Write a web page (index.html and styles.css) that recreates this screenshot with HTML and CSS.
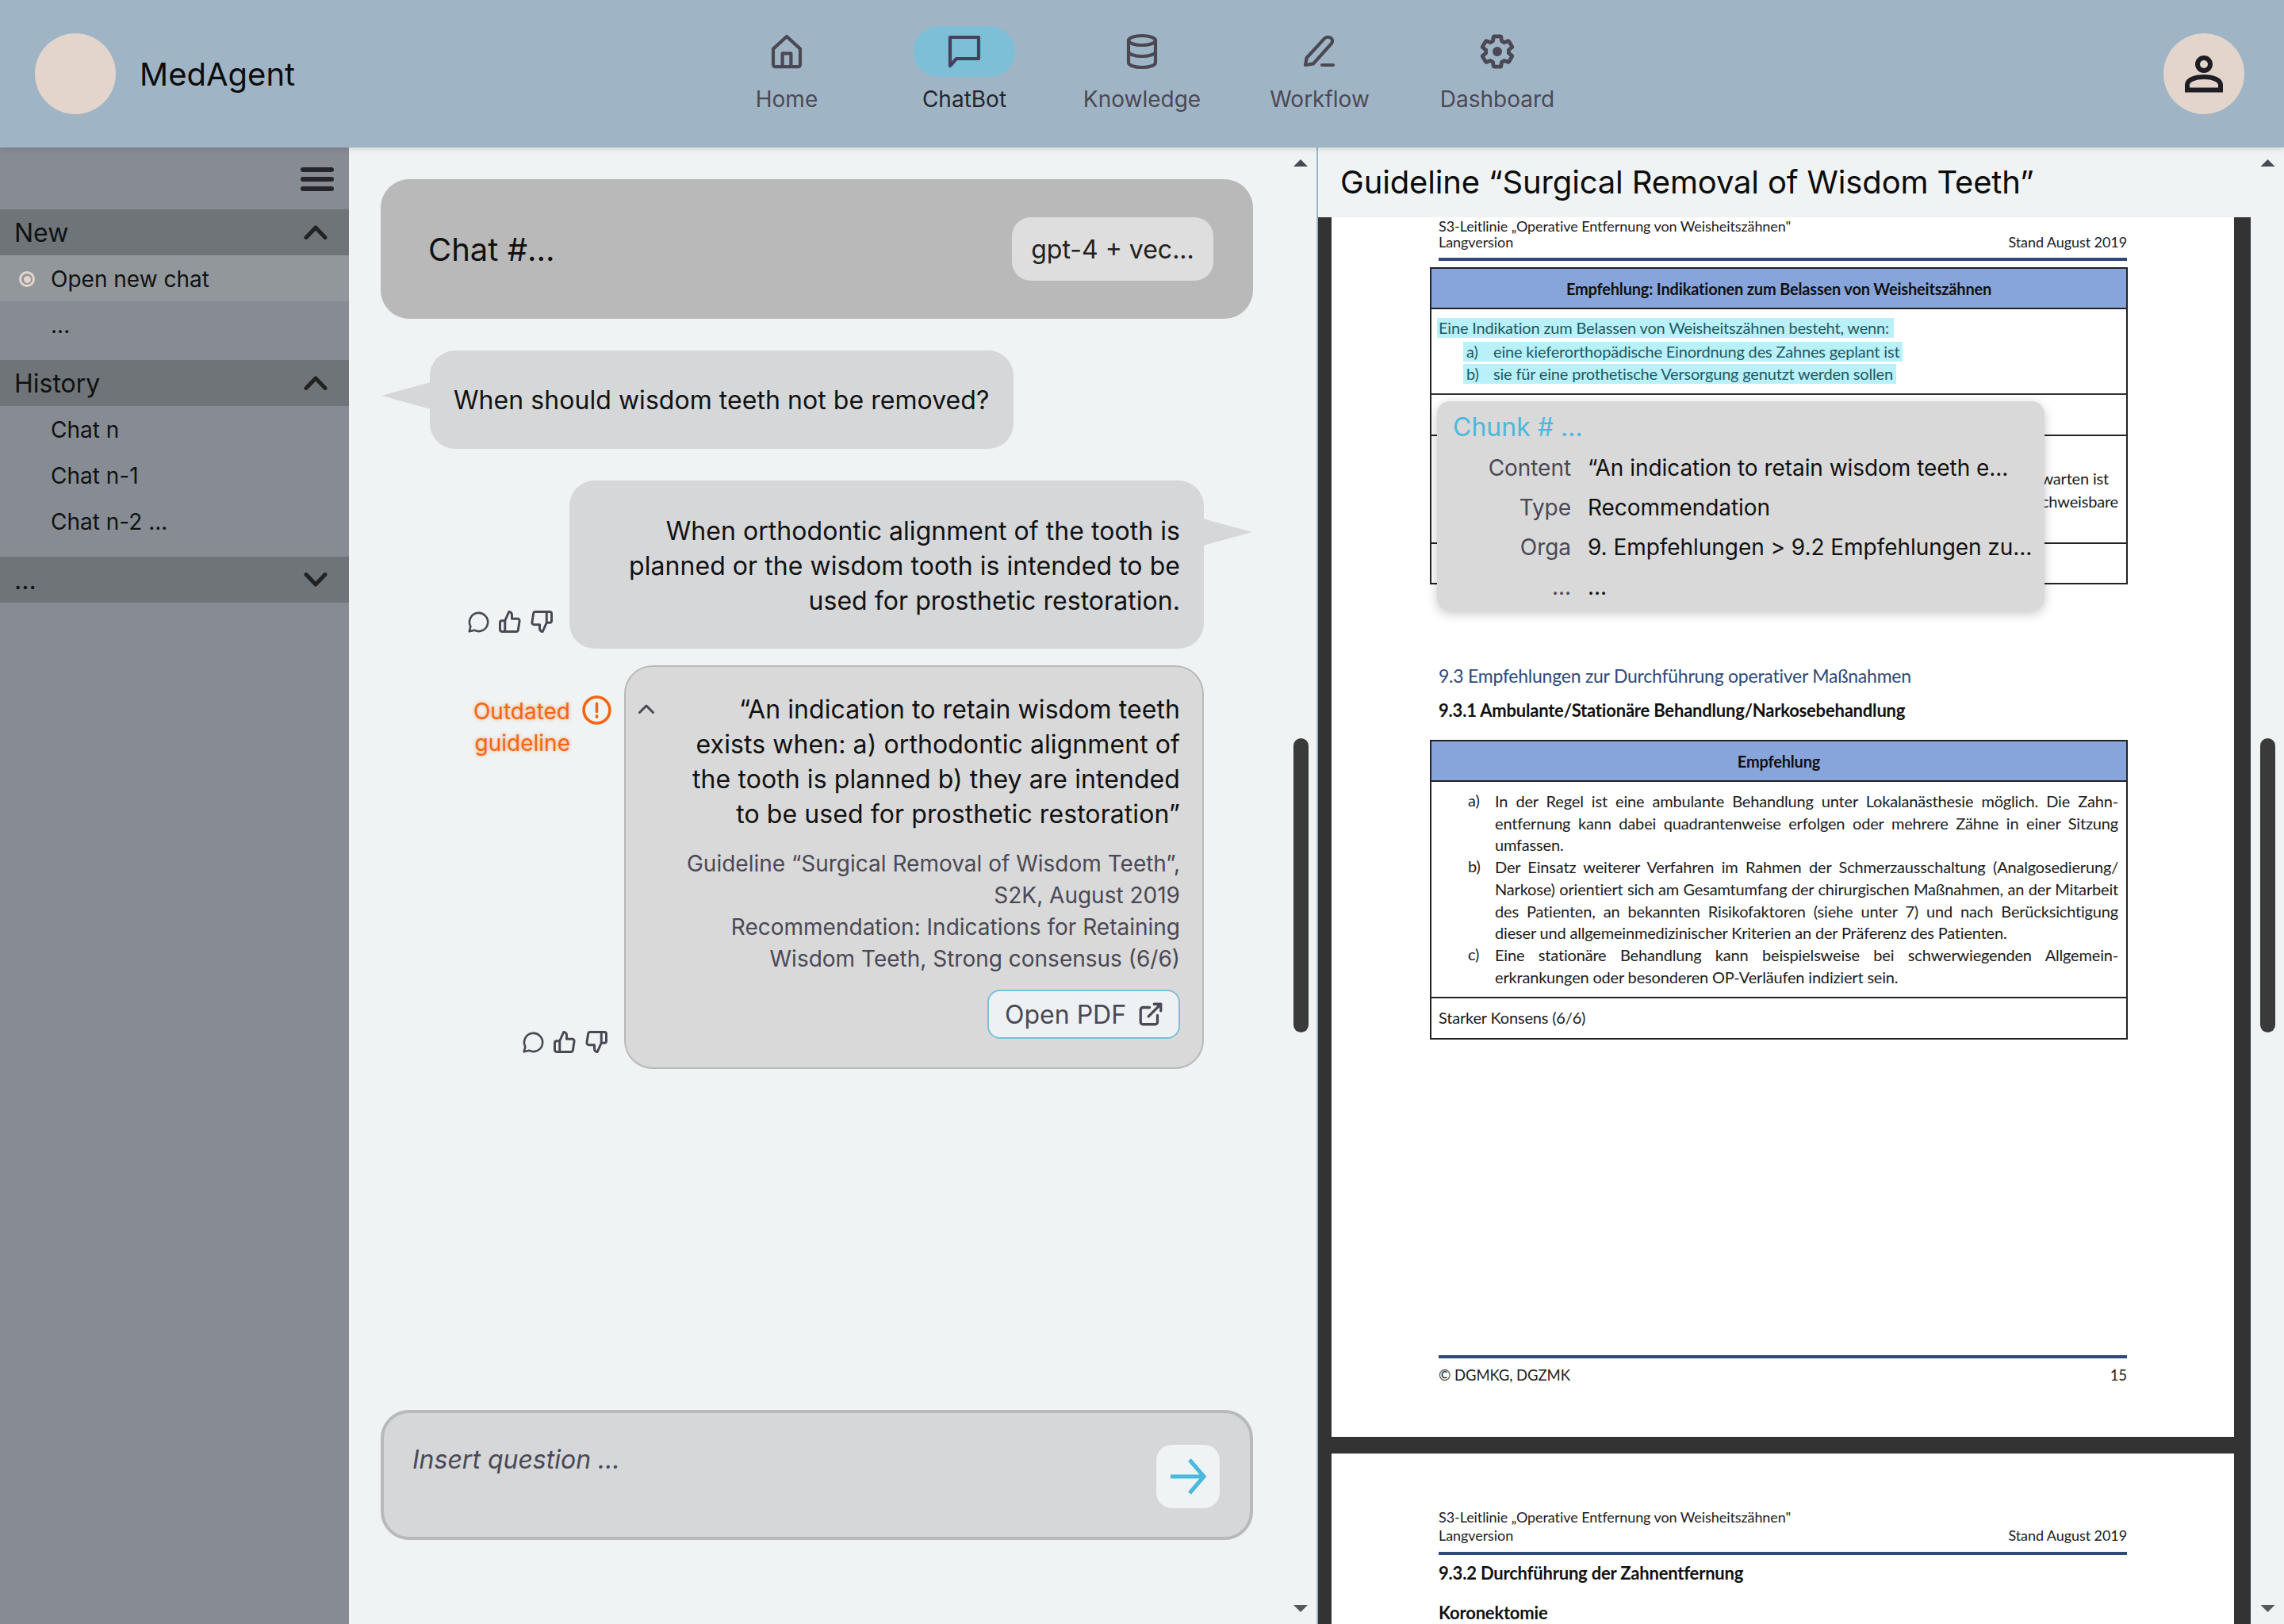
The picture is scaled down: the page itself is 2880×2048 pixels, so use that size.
FILE: index.html
```html
<!DOCTYPE html>
<html lang="en">
<head>
<meta charset="utf-8">
<title>MedAgent</title>
<link rel="stylesheet" href="styles.css">
</head>
<body>
<div class="app">
  <header class="topbar">
    <div class="brand"><span class="avatar"></span><span class="brand-name">MedAgent</span></div>
    <nav class="nav">
      <a class="nav-item"><span class="nav-pill"><svg class="nav-icon" viewBox="0 0 24 24"><path d="M3.500 10.300 12 2.500l8.500 7.800V20.300a1.300 1.300 0 0 1-1.300 1.300H4.800a1.300 1.300 0 0 1-1.300-1.300zM9.300 21.500v-8.300h5.400v8.300"/></svg></span><span class="nav-label">Home</span></a>
      <a class="nav-item active"><span class="nav-pill"><svg class="nav-icon" viewBox="0 0 24 24"><path d="M3 3h18v13.500H7L3 21z"/></svg></span><span class="nav-label">ChatBot</span></a>
      <a class="nav-item"><span class="nav-pill"><svg class="nav-icon" viewBox="0 0 24 24"><ellipse cx="12" cy="5" rx="8.500" ry="3"/><path d="M3.500 5v14c0 1.700 3.800 3 8.500 3s8.500-1.300 8.500-3V5M3.500 12c0 1.700 3.800 3 8.500 3s8.500-1.300 8.500-3"/></svg></span><span class="nav-label">Knowledge</span></a>
      <a class="nav-item"><span class="nav-pill"><svg class="nav-icon" viewBox="0 0 24 24"><path d="M3 20.500 3.800 16 15 3.800c1-1.200 3-1.200 4.300-.2 1 1 1 2.400.1 3.400L8 19.700zM13.500 20.500h7"/></svg></span><span class="nav-label">Workflow</span></a>
      <a class="nav-item"><span class="nav-pill"><svg class="nav-icon gear" viewBox="0 0 24 24"><path d="M19.140 12.940c.04-.3.06-.61.06-.94 0-.32-.02-.64-.07-.94l2.030-1.580c.18-.14.23-.41.12-.61l-1.920-3.320c-.12-.22-.37-.29-.59-.22l-2.390.96c-.5-.38-1.030-.7-1.620-.94l-.36-2.540c-.04-.24-.24-.41-.48-.41h-3.840c-.24 0-.43.17-.47.41l-.36 2.540c-.59.24-1.130.57-1.620.94l-2.390-.96c-.22-.08-.47 0-.59.22L2.740 8.870c-.12.21-.08.47.12.61l2.030 1.580c-.05.3-.09.63-.09.94s.02.64.07.94l-2.030 1.580c-.18.14-.23.41-.12.61l1.920 3.320c.12.22.37.29.59.22l2.390-.96c.5.38 1.030.7 1.620.94l.36 2.540c.05.24.24.41.48.41h3.840c.24 0 .44-.17.47-.41l.36-2.540c.59-.24 1.130-.56 1.620-.94l2.390.96c.22.08.47 0 .59-.22l1.920-3.320c.12-.22.07-.47-.12-.61z"/><circle class="solid" cx="12" cy="12" r="3"/></svg></span><span class="nav-label">Dashboard</span></a>
    </nav>
    <div class="user"><span class="user-avatar"><svg class="user-icon" viewBox="0 0 48 48"><circle cx="24" cy="12" r="8"/><path d="M3 44.500V38c0-6 9-10 21-10s21 4 21 10v6.500z"/></svg></span></div>
  </header>

  <div class="workspace">
    <aside class="sidebar">
      <div class="menu-row"><span class="burger"><i></i><i></i><i></i></span></div>
      <section class="side-section">
        <div class="side-head"><span>New</span><svg class="chev" viewBox="0 0 30 18"><path d="M3 15.500 15 3l12 12.500"/></svg></div>
        <div class="side-item selected"><span class="radio"></span><span>Open new chat</span></div>
        <div class="side-item">...</div>
      </section>
      <section class="side-section">
        <div class="side-head"><span>History</span><svg class="chev" viewBox="0 0 30 18"><path d="M3 15.500 15 3l12 12.500"/></svg></div>
        <div class="side-item">Chat n</div>
        <div class="side-item">Chat n-1</div>
        <div class="side-item">Chat n-2 ...</div>
      </section>
      <section class="side-section">
        <div class="side-head"><span>...</span><svg class="chev" viewBox="0 0 30 18"><path d="M3 2.500 15 15 27 2.500"/></svg></div>
      </section>
    </aside>

    <main class="chat">
      <div class="chat-column">
        <div class="chat-title"><span>Chat #...</span><span class="model">gpt-4 + vec...</span></div>

        <div class="msg-row question-row">
          <div class="bubble tail-left">When should wisdom teeth not be removed?</div>
        </div>

        <div class="msg-row answer-row">
          <div class="actions">
            <svg class="act" viewBox="0 0 28 28"><path d="M3.500 25.500 5 19.500A10.800 10.800 0 1 1 9.500 24z"/></svg>
            <svg class="act" viewBox="0 0 24 24"><path d="M7 22H4a2 2 0 0 1-2-2v-7a2 2 0 0 1 2-2h3m0 11V11l4-9a3 3 0 0 1 3 3v4h5.660a2 2 0 0 1 2 2.300l-1.380 9a2 2 0 0 1-2 1.700H7z"/></svg>
            <svg class="act" viewBox="0 0 24 24"><path d="M17 2h3a2 2 0 0 1 2 2v7a2 2 0 0 1-2 2h-3m0-11v11l-4 9a3 3 0 0 1-3-3v-4H4.340a2 2 0 0 1-2-2.300l1.380-9a2 2 0 0 1 2-1.700H17z"/></svg>
          </div>
          <div class="bubble answer tail-right">When orthodontic alignment of the tooth is<br>planned or the wisdom tooth is intended to be<br>used for prosthetic restoration.</div>
        </div>

        <div class="msg-row source-row">
          <div class="source-side">
            <div class="warning">
              <span class="warning-text">Outdated<br>guideline</span>
              <svg class="warning-icon" viewBox="0 0 36 36"><circle cx="18" cy="18" r="16"/><path d="M18 10v10M18 25v1.500"/></svg>
            </div>
            <div class="actions">
              <svg class="act" viewBox="0 0 28 28"><path d="M3.500 25.500 5 19.500A10.800 10.800 0 1 1 9.500 24z"/></svg>
              <svg class="act" viewBox="0 0 24 24"><path d="M7 22H4a2 2 0 0 1-2-2v-7a2 2 0 0 1 2-2h3m0 11V11l4-9a3 3 0 0 1 3 3v4h5.660a2 2 0 0 1 2 2.300l-1.380 9a2 2 0 0 1-2 1.700H7z"/></svg>
              <svg class="act" viewBox="0 0 24 24"><path d="M17 2h3a2 2 0 0 1 2 2v7a2 2 0 0 1-2 2h-3m0-11v11l-4 9a3 3 0 0 1-3-3v-4H4.340a2 2 0 0 1-2-2.300l1.380-9a2 2 0 0 1 2-1.700H17z"/></svg>
            </div>
          </div>
          <article class="source-card">
            <svg class="collapse" viewBox="0 0 22 14"><path d="M2.500 11.500 11 3l8.500 8.500"/></svg>
            <div class="source-body">
              <p class="quote">“An indication to retain wisdom teeth<br>exists when: a) orthodontic alignment of<br>the tooth is planned b) they are intended<br>to be used for prosthetic restoration”</p>
              <p class="meta">Guideline “Surgical Removal of Wisdom Teeth”,<br>S2K, August 2019<br>Recommendation: Indications for Retaining<br>Wisdom Teeth, Strong consensus (6/6)</p>
              <button class="open-pdf"><span>Open PDF</span><svg class="open-icon" viewBox="0 0 24 24"><path d="M18 13v6a2 2 0 0 1-2 2H5a2 2 0 0 1-2-2V8a2 2 0 0 1 2-2h6M15 3h6v6M10 14 21 3"/></svg></button>
            </div>
          </article>
        </div>

        <div class="composer">
          <span class="placeholder">Insert question ...</span>
          <span class="send"><svg class="send-icon" viewBox="0 0 44 44"><path d="M0 22h42M24 1l18 21-18 21"/></svg></span>
        </div>
      </div>
      <div class="scrollbar"><span class="tri up"></span><span class="thumb"></span><span class="tri down"></span></div>
    </main>

    <section class="viewer">
      <div class="viewer-main">
        <h1 class="viewer-title">Guideline “Surgical Removal of Wisdom Teeth”</h1>
        <div class="pdf">
          <div class="page page-one">
            <div class="doc-head first">
              <div class="doc-line-one">S3-Leitlinie „Operative Entfernung von Weisheitszähnen"</div>
              <div class="split"><span>Langversion</span><span>Stand August 2019</span></div>
            </div>
            <div class="doc-table table-a">
              <div class="t-head">Empfehlung: Indikationen zum Belassen von Weisheitszähnen</div>
              <div class="t-hl">
                <div class="hl hl-1">Eine Indikation zum Belassen von Weisheitszähnen besteht, wenn:</div>
                <div class="hl hl-2"><span class="mark">a)</span>eine kieferorthopädische Einordnung des Zahnes geplant ist</div>
                <div class="hl hl-3"><span class="mark">b)</span>sie für eine prothetische Versorgung genutzt werden sollen</div>
              </div>
              <div class="t-blank"></div>
              <div class="t-behind"><div class="end-1">zu erwarten ist</div><div class="end-2">nachweisbare</div></div>
              <div class="t-last"></div>
            </div>
            <h2 class="doc-h2">9.3 Empfehlungen zur Durchführung operativer Maßnahmen</h2>
            <h3 class="doc-h3">9.3.1 Ambulante/Stationäre Behandlung/Narkosebehandlung</h3>
            <div class="doc-table table-b">
              <div class="t-head">Empfehlung</div>
              <div class="t-body">
                <div class="li"><span class="mark">a)</span><div>
                  <span class="ln j">In der Regel ist eine ambulante Behandlung unter Lokalanästhesie möglich. Die Zahn-</span>
                  <span class="ln j">entfernung kann dabei quadrantenweise erfolgen oder mehrere Zähne in einer Sitzung</span>
                  <span class="ln">umfassen.</span></div></div>
                <div class="li"><span class="mark">b)</span><div>
                  <span class="ln j">Der Einsatz weiterer Verfahren im Rahmen der Schmerzausschaltung (Analgosedierung/</span>
                  <span class="ln j">Narkose) orientiert sich am Gesamtumfang der chirurgischen Maßnahmen, an der Mitarbeit</span>
                  <span class="ln j">des Patienten, an bekannten Risikofaktoren (siehe unter 7) und nach Berücksichtigung</span>
                  <span class="ln">dieser und allgemeinmedizinischer Kriterien an der Präferenz des Patienten.</span></div></div>
                <div class="li"><span class="mark">c)</span><div>
                  <span class="ln j">Eine stationäre Behandlung kann beispielsweise bei schwerwiegenden Allgemein-</span>
                  <span class="ln">erkrankungen oder besonderen OP-Verläufen indiziert sein.</span></div></div>
              </div>
              <div class="t-foot">Starker Konsens (6/6)</div>
            </div>
            <div class="doc-foot"><span>© DGMKG, DGZMK</span><span>15</span></div>

            <aside class="chunk">
              <div class="chunk-title">Chunk # ...</div>
              <dl class="chunk-grid">
                <dt>Content</dt><dd>“An indication to retain wisdom teeth e...</dd>
                <dt>Type</dt><dd>Recommendation</dd>
                <dt>Orga</dt><dd>9. Empfehlungen &gt; 9.2 Empfehlungen zu...</dd>
                <dt>...</dt><dd>...</dd>
              </dl>
            </aside>
          </div>
          <div class="page page-two">
            <div class="doc-head">
              <div>S3-Leitlinie „Operative Entfernung von Weisheitszähnen"</div>
              <div class="split"><span>Langversion</span><span>Stand August 2019</span></div>
            </div>
            <h3 class="doc-h3 p2-a">9.3.2 Durchführung der Zahnentfernung</h3>
            <h3 class="doc-h3 p2-b">Koronektomie</h3>
          </div>
        </div>
      </div>
      <div class="scrollbar side"><span class="tri up"></span><span class="thumb"></span><span class="tri down"></span></div>
    </section>
  </div>
</div>
</body>
</html>
```

FILE: styles.css
```css
* { box-sizing: border-box; }
html, body { margin: 0; padding: 0; }
body { width: 2880px; height: 2048px; overflow: hidden; font-family: Inter, "Liberation Sans", sans-serif; color: #111; background: #eff3f4; }
p, h1, h2, h3, dl, dd { margin: 0; }

.app { width: 2880px; height: 2048px; display: flex; flex-direction: column; }

/* top bar */
.topbar { height: 186px; flex: none; display: grid; grid-template-columns: 1fr auto 1fr; background: #9fb5c6; position: relative; z-index: 3; box-shadow: 0 2px 8px rgba(0,0,0,.12); }
.brand { display: flex; align-items: center; gap: 30px; margin-left: 44px; }
.avatar { width: 102px; height: 102px; border-radius: 50%; background: #e3d5cc; }
.brand-name { font-size: 40px; color: #0c0c0c; }
.nav { display: flex; }
.nav-item { width: 224px; padding-top: 33px; display: flex; flex-direction: column; align-items: center; color: #4b4854; }
.nav-pill { width: 128px; height: 64px; border-radius: 32px; display: flex; align-items: center; justify-content: center; }
.nav-icon { width: 48px; height: 48px; fill: none; stroke: #4b4854; stroke-width: 2.100; stroke-linejoin: round; stroke-linecap: round; }
.nav-icon .solid { fill: #4b4854; stroke: none; }
.gear { stroke-width: 2.400; }
.nav-label { margin-top: 10px; font-size: 28px; line-height: 36px; }
.active .nav-pill { background: #7cbfd6; }
.active .nav-icon { stroke: #46405e; }
.active .nav-label { color: #25242b; }
.user { display: flex; align-items: center; justify-content: flex-end; margin-right: 50px; }
.user-avatar { width: 102px; height: 102px; border-radius: 50%; background: #e3d5cc; display: flex; align-items: center; justify-content: center; }
.user-icon { width: 48px; height: 48px; fill: none; stroke: #1e1d24; stroke-width: 6; }

.workspace { flex: 1; display: flex; min-height: 0; }

/* sidebar */
.sidebar { width: 440px; flex: none; background: #878c94; }
.menu-row { height: 78px; display: flex; justify-content: flex-end; align-items: flex-start; padding: 25px 19px 0 0; }
.burger { width: 42px; display: flex; flex-direction: column; gap: 6px; }
.burger i { height: 6px; border-radius: 3px; background: #26262a; }
.side-section { margin-bottom: 16px; }
.side-head { height: 58px; background: #6f7478; display: flex; align-items: center; justify-content: space-between; padding: 0 27px 0 18px; font-size: 32px; color: #111; }
.chev { width: 30px; height: 18px; fill: none; stroke: #222; stroke-width: 5; stroke-linecap: round; stroke-linejoin: round; }
.side-item { height: 58px; display: flex; align-items: center; padding: 2px 0 0 64px; font-size: 28px; color: #111; position: relative; }
.selected { background: #92979b; }
.radio { position: absolute; left: 24px; top: 20px; width: 20px; height: 20px; border-radius: 50%; border: 3px solid #e3d5cc; display: flex; align-items: center; justify-content: center; }
.radio::after { content: ""; width: 9px; height: 9px; border-radius: 50%; background: #e3d5cc; }

/* chat */
.chat { width: 1220px; flex: none; display: flex; background: #eff3f4; position: relative; }
.chat-column { width: 1100px; margin-left: 40px; padding: 40px 0 106px; display: flex; flex-direction: column; height: 1862px; }
.chat-title { height: 176px; flex: none; border-radius: 36px; background: #b9b9b9; display: flex; align-items: center; justify-content: space-between; padding: 0 50px 0 60px; font-size: 40px; }
.model { height: 80px; width: 254px; border-radius: 24px; background: #dedede; display: flex; align-items: center; justify-content: center; font-size: 32px; color: #222; }
.msg-row { display: flex; flex: none; }
.bubble { background: #d5d7d9; border-radius: 32px; font-size: 32px; line-height: 44px; color: #111; position: relative; letter-spacing: .05px; }
.question-row { margin-top: 40px; padding-left: 62px; }
.tail-left { width: 736px; height: 124px; padding: 41px 0 0 30px; white-space: nowrap; }
.tail-left::before { content: ""; position: absolute; left: -61px; top: 40px; width: 62px; height: 34px; background: #d5d7d9; clip-path: polygon(0 50%, 100% 0, 100% 100%); }
.answer-row { margin-top: 40px; justify-content: flex-end; padding-right: 62px; gap: 20px; align-items: flex-end; }
.answer { width: 800px; height: 212px; padding: 42px 30px 0 0; text-align: right; }
.tail-right::after { content: ""; position: absolute; right: -61px; top: 48px; width: 62px; height: 34px; background: #d5d7d9; clip-path: polygon(0 0, 100% 50%, 0 100%); }
.actions { display: flex; gap: 10px; margin-bottom: 19px; }
.act { width: 30px; height: 30px; fill: none; stroke: #4a4854; stroke-width: 2.400; stroke-linejoin: round; stroke-linecap: round; }
.source-row { margin-top: 21px; justify-content: flex-end; padding-right: 62px; gap: 16px; }
.source-side { display: flex; flex-direction: column; justify-content: space-between; align-items: flex-end; padding-top: 38px; }
.source-side .actions { margin-right: 4px; }
.warning { display: flex; gap: 15px; align-items: flex-start; }
.warning-text { font-size: 28px; line-height: 40px; text-align: right; color: #f5650f; text-shadow: 0 0 4px rgba(245,101,15,.6); }
.warning-icon { width: 37px; height: 37px; fill: none; stroke: #f5650f; stroke-width: 3.500; stroke-linecap: round; }
.source-card { width: 731px; height: 509px; border: 2px solid #b9b9b9; border-radius: 36px; background: #d9d9d9; display: flex; justify-content: space-between; padding: 32px 28px 0 15px; }
.collapse { width: 22px; height: 14px; margin-top: 14px; fill: none; stroke: #4a4854; stroke-width: 3; stroke-linecap: round; stroke-linejoin: round; }
.source-body { display: flex; flex-direction: column; align-items: flex-end; text-align: right; white-space: nowrap; }
.quote { font-size: 32px; line-height: 44px; color: #111; letter-spacing: .08px; }
.meta { margin-top: 20px; font-size: 28px; line-height: 40px; color: #4a4854; }
.open-pdf { margin-top: 19px; width: 243px; height: 62px; padding: 0 18px 0 20px; border: 2px solid #7cc0d8; border-radius: 16px; background: #edf1f3; display: flex; align-items: center; justify-content: space-between; font: 32px Inter, sans-serif; color: #4a4854; }
.open-icon { width: 34px; height: 34px; fill: none; stroke: #4a4854; stroke-width: 2.300; stroke-linecap: round; stroke-linejoin: round; }
.composer { margin-top: auto; height: 164px; flex: none; width: 1100px; border: 4px solid #b9b9b9; border-radius: 36px; background: #d5d7d9; display: flex; justify-content: space-between; align-items: flex-start; padding: 40px 38px 0 36px; }
.placeholder { font-size: 32px; line-height: 44px; margin-top: -3px; font-style: italic; color: #4a4854; }
.send { width: 80px; height: 80px; border-radius: 20px; background: #eff3f4; display: flex; align-items: center; justify-content: center; }
.send-icon { width: 44px; height: 44px; fill: none; stroke: #4bb8dd; stroke-width: 5; overflow: visible; }

/* scrollbars */
.scrollbar { position: absolute; right: 11px; top: 0; bottom: 0; width: 18px; display: flex; flex-direction: column; align-items: center; padding: 15px 0; }
.scrollbar.side { position: static; width: 42px; flex: none; padding: 15px 10px 15px 11px; }
.tri { width: 18px; height: 9px; flex: none; background: #4a4854; }
.tri.up { clip-path: polygon(50% 0, 100% 100%, 0 100%); }
.tri.down { clip-path: polygon(0 0, 100% 0, 50% 100%); margin-top: auto; background: #58585c; }
.thumb { width: 19px; height: 371px; flex: none; margin-top: 721px; border-radius: 10px; background: #3a3a3a; }

/* viewer */
.viewer { flex: 1; min-width: 0; display: flex; border-left: 2px solid #9fb5c6; background: #eff3f4; }
.viewer-main { width: 1176px; flex: none; display: flex; flex-direction: column; min-height: 0; }
.viewer-title { height: 88px; flex: none; padding-left: 28px; font-weight: 400; font-size: 40px; line-height: 88px; color: #0c0c0c; white-space: nowrap; letter-spacing: -.15px; }
.pdf { flex: 1; min-height: 0; overflow: hidden; background: #333; padding: 0 21px 0 17px; display: flex; flex-direction: column; gap: 21px; }
.page { flex: none; background: #fff; padding: 0 135px; font-family: Lato, "Liberation Sans", sans-serif; font-size: 18px; color: #1b1b1b; position: relative; letter-spacing: -.08px; }
.page-one { height: 1538px; display: flex; flex-direction: column; }
.page-two { height: 400px; padding-top: 69px; }
.doc-head { line-height: 23px; padding-bottom: 9px; border-bottom: 4px solid #2f4a7a; flex: none; }
.doc-head.first { padding-bottom: 8px; }
.doc-line-one { line-height: 22px; margin-bottom: -2px; }
.split { display: flex; justify-content: space-between; }
.doc-table { margin: 8px -1px 0 -11px; border: 2px solid #222; flex: none; font-size: 20px; letter-spacing: -.18px; }
.t-head { height: 51px; border-bottom: 2px solid #222; background: #88a5db; display: flex; align-items: center; justify-content: center; font-weight: 700; color: #111; }
.t-hl { height: 108px; border-bottom: 2px solid #333; padding-top: 11px; position: relative; }
.hl { background: #b9f0f9; color: #1d5a60; height: 25px; line-height: 25px; width: max-content; }
.hl-1 { margin-left: 7px; padding: 0 6px 0 2px; }
.hl-2 { margin: 5px 0 0 40px; padding: 0 4px; }
.hl-3 { margin: 3px 0 0 40px; padding: 0 4px; }
.mark { display: inline-block; width: 34px; }
.t-blank { height: 52px; border-bottom: 2px solid #222; }
.t-behind { height: 136px; border-bottom: 2px solid #222; padding-top: 39px; text-align: right; line-height: 29px; }
.end-1 { padding-right: 22px; }
.end-2 { padding-right: 10px; }
.t-last { height: 49px; }
.doc-h2 { margin-top: 100px; font-weight: 400; font-size: 23px; line-height: 30px; color: #2f4a7a; letter-spacing: -.24px; flex: none; }
.doc-h3 { margin-top: 16px; font-weight: 700; font-size: 22px; line-height: 26px; color: #111; flex: none; letter-spacing: -.2px; }
.table-b { margin-top: 24px; }
.t-body { height: 273px; border-bottom: 2px solid #222; padding: 11px 10px 0 46px; }
.li { display: flex; }
.li .mark { flex: none; }
.li > div { flex: 1; min-width: 0; }
.ln { display: block; line-height: 27.700px; white-space: nowrap; }
.ln.j { white-space: normal; text-align: justify; text-align-last: justify; }
.t-foot { height: 50px; padding-left: 9px; line-height: 48px; }
.doc-foot { margin-top: auto; border-top: 4px solid #2f4a7a; display: flex; justify-content: space-between; padding: 10px 0 66px; line-height: 23px; flex: none; font-size: 18.500px; }
.p2-a { margin-top: 10px; }
.p2-b { margin-top: 24px; }

.chunk { position: absolute; left: 133px; top: 232px; width: 766px; height: 264px; border-radius: 16px; background: #d9d9d9; box-shadow: 0 4px 14px rgba(0,0,0,.22); padding-top: 11px; font-family: Inter, sans-serif; letter-spacing: 0; }
.chunk-title { margin-left: 20px; font-size: 32px; line-height: 44px; color: #4bb8dd; }
.chunk-grid { margin-top: 4px; display: grid; grid-template-columns: 169px 1fr; column-gap: 21px; font-size: 28px; line-height: 50px; white-space: nowrap; letter-spacing: -.05px; }
.chunk-grid dt { text-align: right; color: #4a4854; }
.chunk-grid dd { color: #111; }
```
